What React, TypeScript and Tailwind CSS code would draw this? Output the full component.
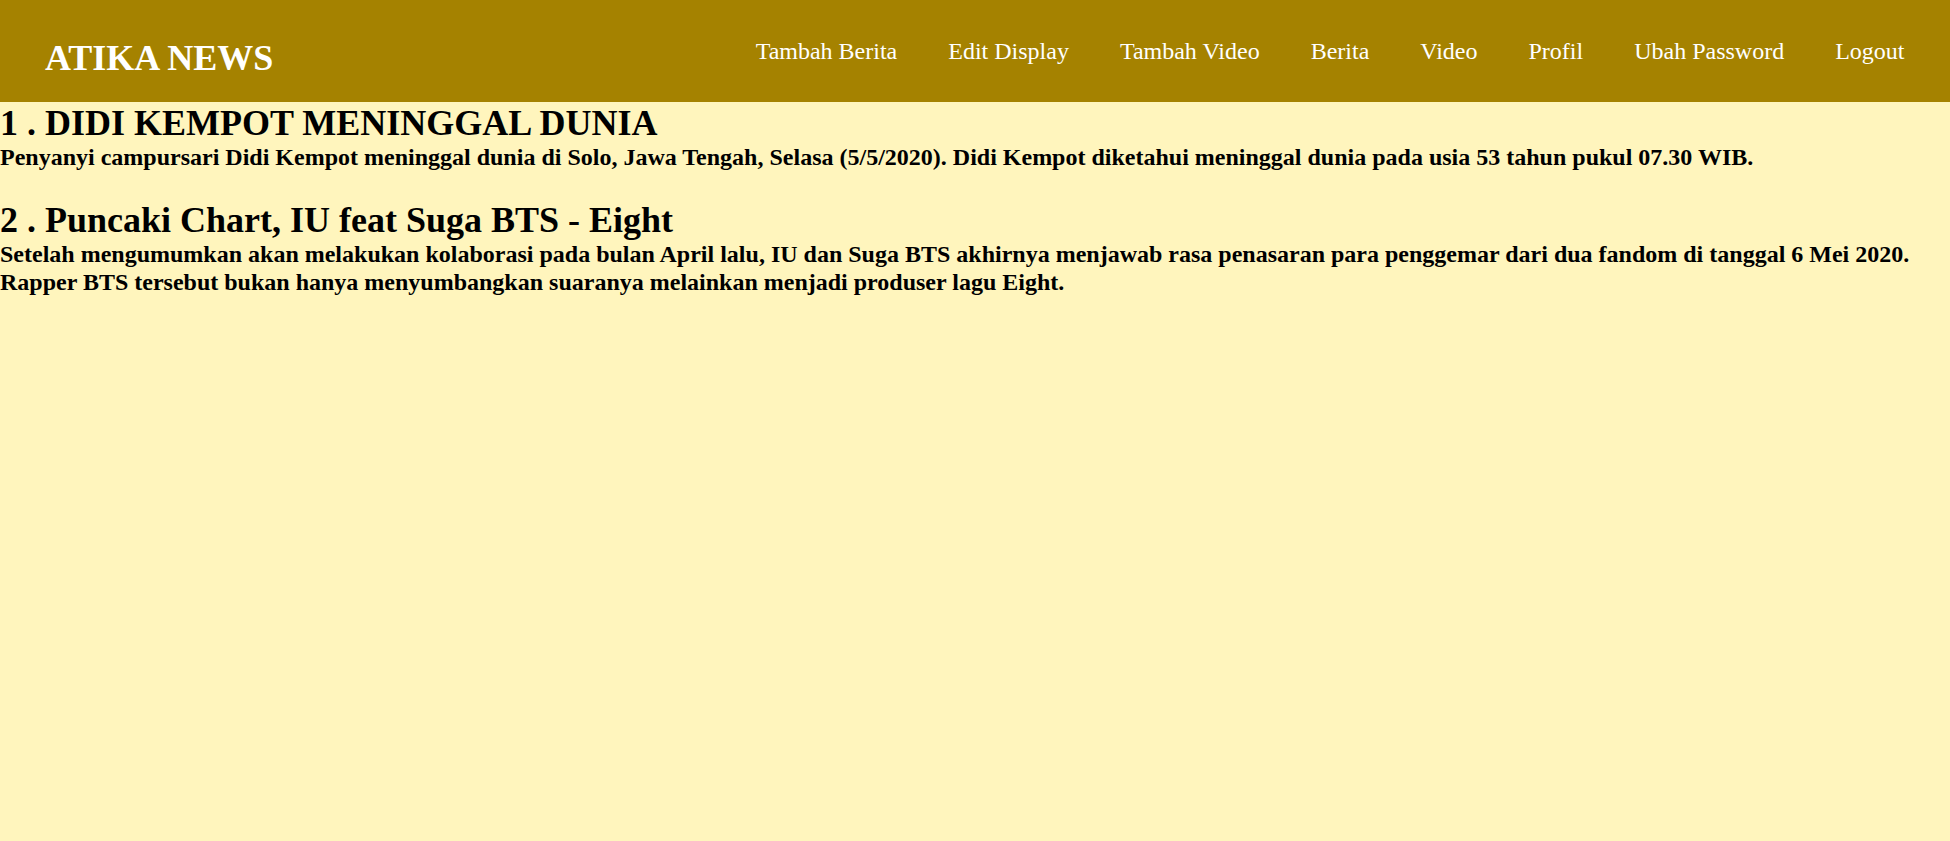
import React from "react";

const navItems = [
  "Tambah Berita",
  "Edit Display",
  "Tambah Video",
  "Berita",
  "Video",
  "Profil",
  "Ubah Password",
  "Logout",
];

export default function App() {
  return (
    <div
      className="min-h-screen bg-[#fff5bd] text-black"
      style={{ fontFamily: '"Liberation Serif", "Times New Roman", serif' }}
    >
      <header className="flex h-[102px] items-center justify-between bg-[#a58200] pl-[45px] pr-[20px]">
        <div className="mt-[16px] text-[36px] font-bold leading-[1.15] text-white">ATIKA NEWS</div>
        <nav className="mt-[2px] flex items-center">
          {navItems.map((item) => (
            <a
              key={item}
              href="#"
              className="px-[25.5px] text-[24px] leading-[1.15] text-white"
            >
              {item}
            </a>
          ))}
        </nav>
      </header>
      <main className="pt-[1px]">
        <h2 className="text-[36px] font-bold leading-[1.15]">1 . DIDI KEMPOT MENINGGAL DUNIA</h2>
        <p className="text-[24px] font-bold leading-[1.15]">
          Penyanyi campursari Didi Kempot meninggal dunia di Solo, Jawa Tengah, Selasa (5/5/2020). Didi Kempot diketahui meninggal dunia pada usia 53 tahun pukul 07.30 WIB.
        </p>
        <div className="h-[27.6px]" />
        <h2 className="text-[36px] font-bold leading-[1.15]">2 . Puncaki Chart, IU feat Suga BTS - Eight</h2>
        <p className="text-[24px] font-bold leading-[1.15]">
          Setelah mengumumkan akan melakukan kolaborasi pada bulan April lalu, IU dan Suga BTS akhirnya menjawab rasa penasaran para penggemar dari dua fandom di tanggal 6 Mei 2020. Rapper BTS tersebut bukan hanya menyumbangkan suaranya melainkan menjadi produser lagu Eight.
        </p>
      </main>
    </div>
  );
}
